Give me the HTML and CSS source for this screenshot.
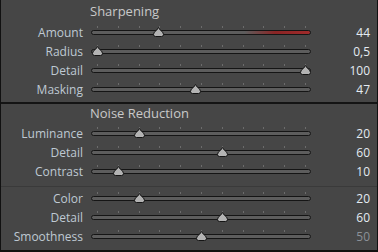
FILE: index.html
```html
<!DOCTYPE html>
<html lang="en">
<head>
  <meta charset="UTF-8">
  <title>Detail</title>
  <link rel="stylesheet" href="styles.css">
</head>
<body>
  <div class="panel">
    <!-- Sharpening -->
    <section class="section">
      <h2 class="title">Sharpening</h2>
      <div class="row">
        <span class="label">Amount</span>
        <div class="slider">
          <div class="ticks"><i></i><i></i><i></i><i></i><i></i><i></i><i></i><i></i><i></i><i></i><i></i></div>
          <div class="track track-red"></div>
          <div class="rail"><svg class="thumb" style="left: 29.3%" width="11" height="10" viewBox="0 0 11 10"><path d="M5.5 0.5 L7.2 3 Q10.5 5 10.5 7.5 Q10.5 9.5 8.5 9.5 L2.5 9.5 Q0.5 9.5 0.5 7.5 Q0.5 5 3.8 3 Z"/></svg></div>
        </div>
        <span class="value">44</span>
      </div>
      <div class="row">
        <span class="label">Radius</span>
        <div class="slider">
          <div class="ticks"><i></i><i></i><i></i><i></i><i></i><i></i><i></i><i></i><i></i><i></i><i></i></div>
          <div class="track"></div>
          <div class="rail"><svg class="thumb" style="left: 0%" width="11" height="10" viewBox="0 0 11 10"><path d="M5.5 0.5 L7.2 3 Q10.5 5 10.5 7.5 Q10.5 9.5 8.5 9.5 L2.5 9.5 Q0.5 9.5 0.5 7.5 Q0.5 5 3.8 3 Z"/></svg></div>
        </div>
        <span class="value">0,5</span>
      </div>
      <div class="row">
        <span class="label">Detail</span>
        <div class="slider">
          <div class="ticks"><i></i><i></i><i></i><i></i><i></i><i></i><i></i><i></i><i></i><i></i><i></i></div>
          <div class="track"></div>
          <div class="rail"><svg class="thumb" style="left: 100%" width="11" height="10" viewBox="0 0 11 10"><path d="M5.5 0.5 L7.2 3 Q10.5 5 10.5 7.5 Q10.5 9.5 8.5 9.5 L2.5 9.5 Q0.5 9.5 0.5 7.5 Q0.5 5 3.8 3 Z"/></svg></div>
        </div>
        <span class="value">100</span>
      </div>
      <div class="row">
        <span class="label">Masking</span>
        <div class="slider">
          <div class="ticks"><i></i><i></i><i></i><i></i><i></i><i></i><i></i><i></i><i></i><i></i><i></i></div>
          <div class="track"></div>
          <div class="rail"><svg class="thumb" style="left: 47%" width="11" height="10" viewBox="0 0 11 10"><path d="M5.5 0.5 L7.2 3 Q10.5 5 10.5 7.5 Q10.5 9.5 8.5 9.5 L2.5 9.5 Q0.5 9.5 0.5 7.5 Q0.5 5 3.8 3 Z"/></svg></div>
        </div>
        <span class="value">47</span>
      </div>
    </section>

    <!-- Noise Reduction -->
    <section class="section section-noise">
      <h2 class="title">Noise Reduction</h2>
      <div class="group">
        <div class="row">
          <span class="label">Luminance</span>
          <div class="slider">
            <div class="ticks"><i></i><i></i><i></i><i></i><i></i><i></i><i></i><i></i><i></i><i></i><i></i></div>
            <div class="track"></div>
            <div class="rail"><svg class="thumb" style="left: 20%" width="11" height="10" viewBox="0 0 11 10"><path d="M5.5 0.5 L7.2 3 Q10.5 5 10.5 7.5 Q10.5 9.5 8.5 9.5 L2.5 9.5 Q0.5 9.5 0.5 7.5 Q0.5 5 3.8 3 Z"/></svg></div>
          </div>
          <span class="value">20</span>
        </div>
        <div class="row">
          <span class="label">Detail</span>
          <div class="slider">
            <div class="ticks"><i></i><i></i><i></i><i></i><i></i><i></i><i></i><i></i><i></i><i></i><i></i></div>
            <div class="track"></div>
            <div class="rail"><svg class="thumb" style="left: 60%" width="11" height="10" viewBox="0 0 11 10"><path d="M5.5 0.5 L7.2 3 Q10.5 5 10.5 7.5 Q10.5 9.5 8.5 9.5 L2.5 9.5 Q0.5 9.5 0.5 7.5 Q0.5 5 3.8 3 Z"/></svg></div>
          </div>
          <span class="value">60</span>
        </div>
        <div class="row">
          <span class="label">Contrast</span>
          <div class="slider">
            <div class="ticks"><i></i><i></i><i></i><i></i><i></i><i></i><i></i><i></i><i></i><i></i><i></i></div>
            <div class="track"></div>
            <div class="rail"><svg class="thumb" style="left: 10%" width="11" height="10" viewBox="0 0 11 10"><path d="M5.5 0.5 L7.2 3 Q10.5 5 10.5 7.5 Q10.5 9.5 8.5 9.5 L2.5 9.5 Q0.5 9.5 0.5 7.5 Q0.5 5 3.8 3 Z"/></svg></div>
          </div>
          <span class="value">10</span>
        </div>
      </div>
      <div class="group group-color">
        <div class="row">
          <span class="label">Color</span>
          <div class="slider">
            <div class="ticks"><i></i><i></i><i></i><i></i><i></i><i></i><i></i><i></i><i></i><i></i><i></i></div>
            <div class="track"></div>
            <div class="rail"><svg class="thumb" style="left: 20%" width="11" height="10" viewBox="0 0 11 10"><path d="M5.5 0.5 L7.2 3 Q10.5 5 10.5 7.5 Q10.5 9.5 8.5 9.5 L2.5 9.5 Q0.5 9.5 0.5 7.5 Q0.5 5 3.8 3 Z"/></svg></div>
          </div>
          <span class="value">20</span>
        </div>
        <div class="row">
          <span class="label">Detail</span>
          <div class="slider">
            <div class="ticks"><i></i><i></i><i></i><i></i><i></i><i></i><i></i><i></i><i></i><i></i><i></i></div>
            <div class="track"></div>
            <div class="rail"><svg class="thumb" style="left: 60%" width="11" height="10" viewBox="0 0 11 10"><path d="M5.5 0.5 L7.2 3 Q10.5 5 10.5 7.5 Q10.5 9.5 8.5 9.5 L2.5 9.5 Q0.5 9.5 0.5 7.5 Q0.5 5 3.8 3 Z"/></svg></div>
          </div>
          <span class="value">60</span>
        </div>
        <div class="row">
          <span class="label">Smoothness</span>
          <div class="slider">
            <div class="ticks"><i></i><i></i><i></i><i></i><i></i><i></i><i></i><i></i><i></i><i></i><i></i></div>
            <div class="track"></div>
            <div class="rail"><svg class="thumb" style="left: 50%" width="11" height="10" viewBox="0 0 11 10"><path d="M5.5 0.5 L7.2 3 Q10.5 5 10.5 7.5 Q10.5 9.5 8.5 9.5 L2.5 9.5 Q0.5 9.5 0.5 7.5 Q0.5 5 3.8 3 Z"/></svg></div>
          </div>
          <span class="value value-dim">50</span>
        </div>
      </div>
    </section>
  </div>
</body>
</html>
```

FILE: styles.css
```css
/* General */
body {
  margin: 0;
  background: #464646;
  font-family: 'Open Sans', sans-serif;
  font-size: 12px;
}

/* Panel frame */
.panel {
  width: 376px;
  height: 250px;
  background: #464646;
  border-left: 1px solid #111;
  border-right: 1px solid #111;
  border-bottom: 2px solid #111;
  overflow: hidden;
}

.section {
  height: 102px;
}

.section-noise {
  border-top: 2px solid #141414;
  height: auto;
}

/* Section titles */
.title {
  margin: 0;
  padding-left: 89px;
  height: 23px;
  line-height: 22px;
  font-size: 13px;
  font-weight: normal;
  color: #c9c9c9;
}

.section-noise .title {
  height: 20px;
  line-height: 19px;
}

.group-color {
  margin-top: 5px;
  padding-top: 2px;
  border-top: 1px solid #3a3a3a;
}

/* Slider rows */
.row {
  display: grid;
  grid-template-columns: 82px 220px 51px;
  column-gap: 8px;
  height: 19px;
  align-items: center;
}

.label {
  text-align: right;
  color: #bfc9d3;
  line-height: 19px;
}

.value {
  text-align: right;
  color: #e4ebf2;
  line-height: 19px;
}

.value-dim {
  color: #8b9198;
}

/* Slider */
.slider {
  position: relative;
  height: 19px;
}

.ticks {
  display: flex;
  justify-content: space-between;
  margin: 3px 5px 0 6px;
  height: 2px;
}

.ticks i {
  width: 1px;
  height: 2px;
  background: #6c6c6c;
}

.track {
  margin-top: 2px;
  height: 3px;
  border: 1px solid #151515;
  border-radius: 3px;
  background: #5d5d5d;
}

.track-red {
  background: linear-gradient(to right, #5d5d5d 0%, #5d5d5d 70%, #8a2525 84%, #a02b2b 100%);
}

/* Thumb travels between the first and last tick */
.rail {
  position: absolute;
  top: 4px;
  left: 6px;
  right: 6px;
  height: 10px;
}

.thumb {
  position: absolute;
  top: 0;
  margin-left: -5px;
  fill: #b3b3b3;
  stroke: #151515;
  stroke-width: 1;
}
```
